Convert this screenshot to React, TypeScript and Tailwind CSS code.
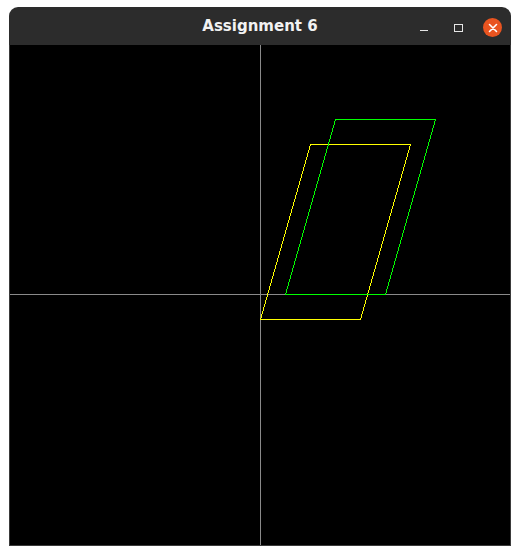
import React from 'react';

type Pt = [number, number];

const yellow: Pt[] = [[250, 274], [350, 274], [400, 99], [300, 99]];
const green: Pt[] = [[275, 249], [375, 249], [425, 74], [325, 74]];

function pts(p: Pt[]) {
  return p.map(([x, y]) => `${x + 0.5},${y + 0.5}`).join(' ');
}

function TitleBar() {
  return (
    <div className="grid grid-cols-[1fr_auto_1fr] items-center h-[38px] bg-[#2c2c2c] rounded-t-[9px]">
      <div />
      <span className="text-[15px] font-bold text-[#f2f2f2] font-['DejaVu_Sans',sans-serif] pt-[1px]">
        Assignment 6
      </span>
      <div className="flex items-center justify-end gap-[14px] pr-[9px] pt-[3px]">
        <span className="w-[8px] h-[1.5px] bg-[#e6e6e6] mt-[6px]" />
        <span className="w-[9px] h-[8px] border-[1.5px] border-[#e6e6e6] ml-[12px] mr-[6px]" />
        <span className="w-[19px] h-[19px] rounded-full bg-[#e95420] flex items-center justify-center">
          <svg width="10" height="10" viewBox="0 0 10 10">
            <path d="M1.5 1.5 L8.5 8.5 M8.5 1.5 L1.5 8.5" stroke="#fff" strokeWidth="1.6" strokeLinecap="round" />
          </svg>
        </span>
      </div>
    </div>
  );
}

export default function App() {
  return (
    <div className="w-[520px] h-[555px] bg-white pt-[7px] pl-[9px]">
      <div className="w-[502px] flex flex-col">
        <TitleBar />
        <div className="border-x border-b border-[#3a3a3a] bg-black">
          <svg width="500" height="500" viewBox="0 0 500 500" shapeRendering="crispEdges" className="block">
            <line x1="250.5" y1="0" x2="250.5" y2="500" stroke="#8a8a8a" strokeWidth="1" />
            <line x1="0" y1="249.5" x2="500" y2="249.5" stroke="#8a8a8a" strokeWidth="1" />
            <polygon points={pts(yellow)} fill="none" stroke="#ffff00" strokeWidth="1" />
            <polygon points={pts(green)} fill="none" stroke="#00ff00" strokeWidth="1" />
          </svg>
        </div>
      </div>
    </div>
  );
}
